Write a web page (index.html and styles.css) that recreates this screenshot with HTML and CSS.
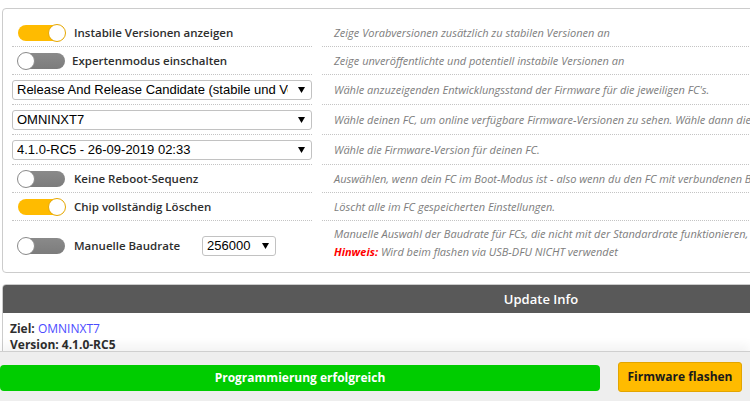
FILE: index.html
```html
<!DOCTYPE html>
<html lang="de">
<head>
<meta charset="utf-8">
<title>Firmware Flasher</title>
<link rel="stylesheet" href="styles.css">
</head>
<body>
<div class="app">
  <main class="main">
    <div class="content">
      <section class="panel options">
        <div class="row">
          <div class="cell left"><span class="toggle on"><span class="knob"></span></span><span class="label">Instabile Versionen anzeigen</span></div>
          <div class="cell right">Zeige Vorabversionen zusätzlich zu stabilen Versionen an</div>
        </div>
        <div class="row">
          <div class="cell left"><span class="toggle"><span class="knob"></span></span><span class="label label-tight">Expertenmodus einschalten</span></div>
          <div class="cell right">Zeige unveröffentlichte und potentiell instabile Versionen an</div>
        </div>
        <div class="row row-select">
          <div class="cell left"><div class="select wide"><span class="sel-text">Release And Release Candidate (stabile und Vorabversionen)</span><svg class="arrow" width="7" height="6" viewBox="0 0 7 6"><path d="M0 0H7L3.5 6Z" fill="#000"/></svg></div></div>
          <div class="cell right">Wähle anzuzeigenden Entwicklungsstand der Firmware für die jeweiligen FC's.</div>
        </div>
        <div class="row row-select">
          <div class="cell left"><div class="select wide"><span class="sel-text">OMNINXT7</span><svg class="arrow" width="7" height="6" viewBox="0 0 7 6"><path d="M0 0H7L3.5 6Z" fill="#000"/></svg></div></div>
          <div class="cell right">Wähle deinen FC, um online verfügbare Firmware-Versionen zu sehen. Wähle dann die Firmware-Version aus, die du flashen möchtest.</div>
        </div>
        <div class="row row-select">
          <div class="cell left"><div class="select wide"><span class="sel-text">4.1.0-RC5 - 26-09-2019 02:33</span><svg class="arrow" width="7" height="6" viewBox="0 0 7 6"><path d="M0 0H7L3.5 6Z" fill="#000"/></svg></div></div>
          <div class="cell right">Wähle die Firmware-Version für deinen FC.</div>
        </div>
        <div class="row">
          <div class="cell left"><span class="toggle"><span class="knob"></span></span><span class="label">Keine Reboot-Sequenz</span></div>
          <div class="cell right">Auswählen, wenn dein FC im Boot-Modus ist - also wenn du den FC mit verbundenen Boot-Pins oder gedrücktem Boot-Knopf angeschlossen hast.</div>
        </div>
        <div class="row">
          <div class="cell left"><span class="toggle on"><span class="knob"></span></span><span class="label">Chip vollständig Löschen</span></div>
          <div class="cell right">Löscht alle im FC gespeicherten Einstellungen.</div>
        </div>
        <div class="row row-last">
          <div class="cell left"><span class="toggle"><span class="knob"></span></span><span class="label">Manuelle Baudrate</span><div class="select baud"><span class="sel-text">256000</span><svg class="arrow" width="7" height="6" viewBox="0 0 7 6"><path d="M0 0H7L3.5 6Z" fill="#000"/></svg></div></div>
          <div class="cell right two-line"><span class="line">Manuelle Auswahl der Baudrate für FCs, die nicht mit der Standardrate funktionieren, oder für Verbindungen über Bluetooth.</span><span class="line"><b class="hint">Hinweis:</b> Wird beim flashen via USB-DFU NICHT verwendet</span></div>
        </div>
      </section>
      <section class="panel info">
        <div class="info-head">Update Info</div>
        <div class="info-body">
          <div><b>Ziel:</b> <span class="target">OMNINXT7</span></div>
          <div><b>Version: 4.1.0-RC5</b></div>
        </div>
      </section>
    </div>
  </main>
  <footer class="footer">
    <div class="progress">Programmierung erfolgreich</div>
    <button class="flash-btn" type="button">Firmware flashen</button>
  </footer>
</div>
</body>
</html>
```
FILE: styles.css
```css
html, body {
  margin: 0;
  padding: 0;
  height: 100%;
  background: #fff;
  overflow: hidden;
}
body {
  font-family: "Open Sans", "Liberation Sans", sans-serif;
  color: #2e2e2e;
}
.app {
  display: flex;
  flex-direction: column;
  height: 100vh;
}
.main {
  flex: 1;
  overflow: hidden;
  min-height: 0;
}
.content {
  width: 1078px;
  padding: 8px 0 0 2px;
}
.panel {
  border: 1px solid #cccccc;
  border-radius: 4px;
  background: #fff;
}
.options {
  padding: 10px 0 7px 9px;
}
.row {
  display: grid;
  grid-template-columns: 300px 1fr;
  column-gap: 10px;
}
.cell {
  border-bottom: 1px dotted #c4c4c4;
  min-height: 27px;
  display: flex;
  align-items: center;
}
.row-select .cell {
  min-height: 29px;
}
.row-last .cell {
  border-bottom: none;
  min-height: 44px;
}
.row-last .left {
  padding-top: 5px;
  box-sizing: border-box;
}
.left {
  font-size: 11.5px;
  font-weight: 600;
}
.right {
  padding-left: 12px;
  font-size: 11px;
  font-style: italic;
  color: #7d7d7d;
  white-space: nowrap;
  overflow: hidden;
}
.two-line {
  flex-direction: column;
  align-items: flex-start;
  justify-content: center;
  line-height: 18px;
}
.hint {
  color: #ff0000;
  font-weight: 700;
}
.toggle {
  position: relative;
  display: inline-block;
  width: 47px;
  height: 16px;
  border-radius: 8px;
  background: linear-gradient(#8a8a8a, #7c7c7c);
  margin-left: 6px;
  flex: none;
}
.toggle.on {
  background: #ffbb00;
}
.knob {
  position: absolute;
  top: -1px;
  left: -1px;
  width: 16px;
  height: 16px;
  border-radius: 50%;
  background: #fff;
  border: 1px solid #8a8a8a;
}
.toggle.on .knob {
  left: auto;
  right: -1px;
  border-color: #e5a600;
}
.label {
  margin-left: 9px;
  white-space: nowrap;
}
.label-tight {
  margin-left: 7px;
}
.select {
  display: flex;
  align-items: center;
  height: 18px;
  border: 1px solid #c2c2c2;
  border-radius: 3px;
  background: #fff;
  font-family: "Liberation Sans", Arial, sans-serif;
  font-size: 13px;
  font-weight: 400;
  color: #000;
  padding: 0 6px 0 4px;
  box-sizing: content-box;
}
.select.wide {
  width: 288px;
}
.select.baud {
  width: 62px;
  margin-left: 22px;
}
.sel-text {
  flex: 1;
  overflow: hidden;
  white-space: nowrap;
  min-width: 0;
}
.arrow {
  flex: none;
  margin-left: 6px;
}
.wide .arrow {
  margin-left: 6px;
}
.wide .sel-text {
  margin-right: 4px;
}
.info {
  margin-top: 11px;
  overflow: hidden;
}
.info-head {
  background: #595959;
  color: #fff;
  font-weight: 600;
  font-size: 13px;
  text-align: center;
  height: 28px;
  line-height: 28px;
}
.info-body {
  padding: 8px 7px 20px;
  font-size: 12px;
  line-height: 16px;
}
.info-body b {
  font-weight: 700;
}
.target {
  color: #4b4bff;
}
.footer {
  flex: none;
  height: 49px;
  border-top: 1px solid #cfcfcf;
  background: #eeeeee;
  box-shadow: 0 -6px 10px rgba(0, 0, 0, 0.05);
  display: flex;
  align-items: center;
  padding-right: 8px;
  gap: 18px;
  position: relative;
}
.progress {
  width: 600px;
  height: 26px;
  border-radius: 4px;
  background: #00cc00;
  color: #fff;
  font-weight: 700;
  font-size: 12px;
  text-align: center;
  line-height: 26px;
  margin-top: 2px;
}
.flash-btn {
  width: 124px;
  height: 30px;
  background: #ffbb00;
  border: 1px solid #e3a500;
  border-radius: 3px;
  font-family: "Open Sans", "Liberation Sans", sans-serif;
  font-weight: 700;
  font-size: 12px;
  color: #1a1a1a;
  padding: 0;
}
```
